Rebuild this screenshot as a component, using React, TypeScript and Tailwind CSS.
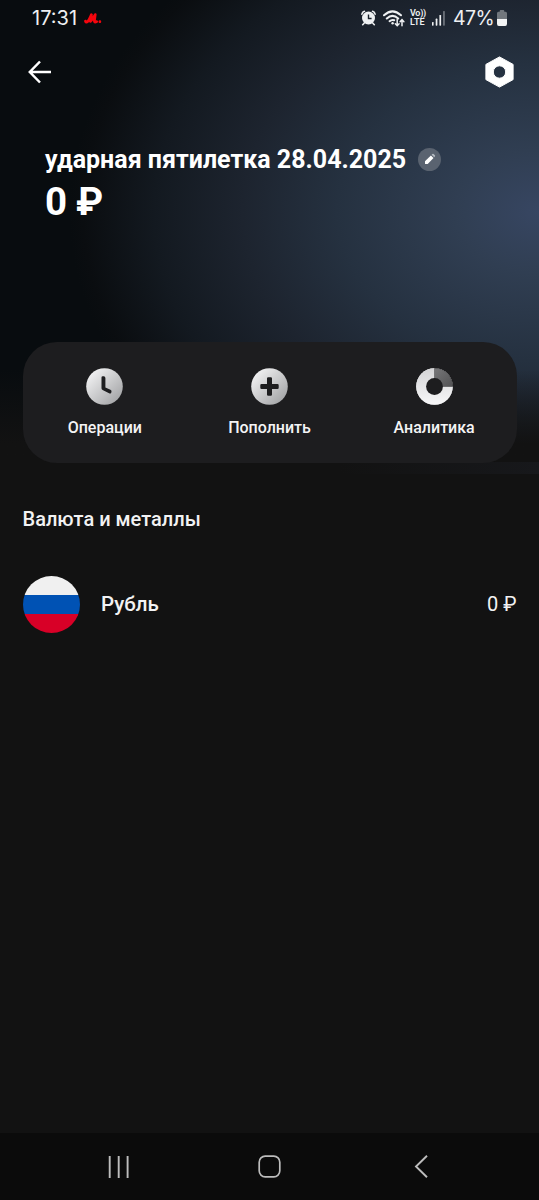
import type { ReactNode } from 'react'

interface Action {
  label: string
  icon: ReactNode
}

function StatusBar() {
  return (
    <div className="flex h-9 items-center justify-between pl-8 pr-[32px] text-[#eef0f2]">
      <div className="flex items-center gap-[6px]">
        <span className="w-[46px] whitespace-nowrap font-['Inter',sans-serif] text-[20px] leading-9 tracking-[0px]">17:31</span>
        <svg className="h-[11px] w-[18px]" viewBox="0 0 17 10" fill="none" stroke="#f5050d" strokeLinecap="round" strokeLinejoin="round">
          <path d="M1.400 7.400Q1.900 9.300 3.500 7.900C5 6.400 5.900 3.800 7 1.400L6 7.800C8 6 9.300 3.700 10.600 1.300L9.800 7.500Q10 9 12 7.900" strokeWidth="2.600" />
          <circle cx="15" cy="8" r="0.8" fill="#f5050d" strokeWidth="1" />
        </svg>
      </div>

      <div className="flex h-9 items-center">
        {/* Alarm */}
        <svg className="mr-[7px] h-4 w-[15px]" viewBox="0 0 15 16">
          <circle cx="7.500" cy="8" r="6.500" fill="#eef0f2" />
          <path d="M.9 4.100Q1.300 2.100 3.400 1.300M14.100 4.100Q13.700 2.100 11.600 1.300M3.100 13.200L1.700 14.700M11.900 13.200l1.400 1.500" fill="none" stroke="#eef0f2" strokeWidth="1.600" strokeLinecap="round" />
          <path d="M7.500 4.500V8.500H10.600" fill="none" stroke="#18202a" strokeWidth="1.400" />
        </svg>
        {/* Wifi */}
        <svg className="mr-[5px] h-[17px] w-[22px]" viewBox="0 0 22 17" fill="none" stroke="#eef0f2" strokeLinecap="round">
          <path d="M1 5.300Q9.500-2.600 18 5.300M3.800 8.500Q9.500 3.200 15.200 8.500M6.600 11.200Q8.600 9.400 11.200 10.200" strokeWidth="2" />
          <circle cx="9.600" cy="13.200" r="1.200" fill="#eef0f2" stroke="none" />
          <path d="M14.200 9.600v6M12.300 13.700l1.900 2 1.900-2M19 15.800v-6M17.100 11.700l1.900-2 1.900 2" strokeWidth="1.500" />
        </svg>
        <div className="mr-[6px] flex w-4 flex-col font-['Roboto',sans-serif] text-[9px] font-semibold leading-[9px]">
          <span className="whitespace-nowrap tracking-[-0.3px]">Vo))</span>
          <span className="tracking-[0.1px]">LTE</span>
        </div>
        {/* Signal */}
        <svg className="mr-[8px] h-[15px] w-[13px]" viewBox="0 0 13 15" fill="#eef0f2">
          <rect x="0" y="11" width="1.600" height="3.700" rx=".6" />
          <rect x="3.700" y="7.600" width="1.700" height="7.100" rx=".6" />
          <rect x="7.400" y="4" width="1.700" height="10.700" rx=".6" />
          <rect x="11.100" y="0" width="1.700" height="14.700" rx=".6" opacity=".4" />
        </svg>
        <span className="w-[44px] whitespace-nowrap font-['Inter',sans-serif] text-[19.5px] leading-9 tracking-[-0.6px]">47%</span>
        {/* Battery */}
        <svg className="h-4 w-[10px]" viewBox="0 0 11 16" preserveAspectRatio="none">
          <path d="M3 1q0-1 1-1h3q1 0 1 1v.8h1.500Q11 1.800 11 3.300V9H0V3.300Q0 1.800 1.500 1.800H3z" fill="#72777d" />
          <path d="M0 9h11v4.700Q11 16 9 16H2Q0 16 0 13.700z" fill="#f2f3f4" />
        </svg>
      </div>
    </div>
  )
}

function TopBar() {
  return (
    <div className="flex h-[72px] items-center justify-between pl-7 pr-[25px]">
      <svg className="h-6 w-6" viewBox="0 0 24 24" fill="none" stroke="white" strokeWidth="2.500">
        <path d="M12 1.500L1.800 12 12 22.500M1.800 12H23" />
      </svg>
      <svg className="h-8 w-[29px]" viewBox="0 0 29 32">
        <path fillRule="evenodd" fill="white" stroke="white" strokeWidth="1" strokeLinejoin="round" d="M14.500.9L28.100 8.400V23.600L14.500 31.100.9 23.600V8.400zM14.500 9.800a6.200 6.200 0 100 12.400 6.200 6.200 0 000-12.400z" />
      </svg>
    </div>
  )
}

function Header() {
  return (
    <div className="px-[45px] pt-[34px] font-['Roboto',sans-serif] text-white">
      <div className="flex h-[34px] items-center gap-3">
        <h1 className="w-[361px] whitespace-nowrap pt-[2px] text-[25px] font-bold leading-[34px]">ударная пятилетка 28.04.2025</h1>
        <span className="flex h-[23px] w-[23px] items-center justify-center rounded-full bg-[#5a6370]">
          <svg className="h-3 w-3" viewBox="0 0 12 12">
            <path d="M1 8.300L6.900 2.400 9.500 5 3.700 10.900H1.500Q1 10.900 1 10.400z" fill="white" />
            <path d="M7.600 1.700l.8-.7q.6-.5 1.200 0l1.300 1.300q.5.600 0 1.200l-.7.800z" fill="#b4bac1" />
          </svg>
        </span>
      </div>
      <p className="mt-[3px] text-[38.5px] font-bold leading-[46px] tracking-[-0.3px]">0 ₽</p>
    </div>
  )
}

const actions: Action[] = [
  {
    label: 'Операции',
    icon: (
      <path d="M15.500 9.500q0-1.300 1.300-1.300h.9q1.700 0 1.700 1.700v9.700l5 2.200q1.300.6 1.100 1.800l-.2 1q-.3 1.500-1.700.8l-7-3.500q-1.100-.6-1.100-1.700z" fill="#1d1d1f" />
    ),
  },
  {
    label: 'Пополнить',
    icon: (
      <path d="M16 10.500q0-1.200 1.200-1.200h2.600q1.200 0 1.200 1.200v5.500h5.500q1.200 0 1.200 1.200v2.600q0 1.200-1.200 1.200H21v5.500q0 1.200-1.200 1.200h-2.600q-1.200 0-1.200-1.200V21h-5.500q-1.200 0-1.200-1.200v-2.600q0-1.200 1.200-1.200H16z" fill="#1d1d1f" />
    ),
  },
  {
    label: 'Аналитика',
    icon: (
      <>
        <circle cx="18.500" cy="18.500" r="18.300" fill="url(#ring)" />
        <path d="M18.500 18.500V0A18.500 18.500 0 0137 18.500z" fill="#1d1d1f" />
        <path d="M18.500 18.500V.2A18.300 18.300 0 0136.800 18.500z" fill="url(#quarter)" />
        <circle cx="18.500" cy="18.500" r="8.400" fill="#1d1d1f" />
      </>
    ),
  },
]

function Actions() {
  return (
    <div className="mx-[22.5px] mt-[116.5px] grid h-[121px] grid-cols-3 rounded-[34px] bg-[#1d1d1f]">
      {actions.map(({ label, icon }) => (
        <button key={label} className="flex flex-col items-center pt-[26px]">
          <svg className="h-[37px] w-[37px]" viewBox="0 0 37 37">
            <defs>
              <linearGradient id="disc" x1="0" y1="0" x2="1" y2="1">
                <stop offset=".1" stopColor="#f3f3f4" />
                <stop offset=".9" stopColor="#a3a4a6" />
              </linearGradient>
              <linearGradient id="ring" x1="0" y1="0" x2="0" y2="1">
                <stop stopColor="#d4d4d6" />
                <stop offset="1" stopColor="#f7f7f8" />
              </linearGradient>
              <linearGradient id="quarter" x1="0" y1="0" x2="1" y2="1">
                <stop stopColor="#777779" />
                <stop offset="1" stopColor="#525254" />
              </linearGradient>
            </defs>
            <circle cx="18.500" cy="18.500" r="18.300" fill="url(#disc)" />
            {icon}
          </svg>
          <span className="mt-[13px] font-['Roboto',sans-serif] text-[16px] font-medium leading-5 text-[#f4f4f5]">{label}</span>
        </button>
      ))}
    </div>
  )
}

function Currencies() {
  return (
    <section className="px-[22.5px] pt-[43px] font-['Roboto',sans-serif] text-[#f2f2f3]">
      <h2 className="text-[20px] font-medium leading-[26px]">Валюта и металлы</h2>
      <div className="mt-[44px] flex h-[57px] items-center">
        <span className="flex h-[57px] w-[57px] flex-col overflow-hidden rounded-full">
          <span className="h-[19px] bg-[#f0f0f0]" />
          <span className="h-[19px] bg-[#0052b4]" />
          <span className="h-[19px] bg-[#d80027]" />
        </span>
        <span className="ml-[21.5px] text-[20.5px] font-medium">Рубль</span>
        <span className="ml-auto text-[20px]">0 ₽</span>
      </div>
    </section>
  )
}

function NavBar() {
  return (
    <nav className="mt-auto grid h-[67px] grid-cols-[238px_63px_238px] items-center justify-items-center bg-[#0b0b0b]">
      <svg className="h-[22px] w-[22px]" viewBox="0 0 22 22" fill="none" stroke="#bdbdbd" strokeWidth="1.900">
        <path d="M1.700 0v22M10.700 0v22M19.600 0v22" />
      </svg>
      <svg className="h-[23px] w-[23px]" viewBox="0 0 23 23" fill="none" stroke="#bdbdbd" strokeWidth="1.700">
        <rect x="1.200" y="1.200" width="20.600" height="20.600" rx="6" />
      </svg>
      <svg className="ml-[2px] h-[23px] w-[14px]" viewBox="0 0 14 23" fill="none" stroke="#bdbdbd" strokeWidth="1.900">
        <path d="M13 .7L2 11.500 13 22.300" />
      </svg>
    </nav>
  )
}

export default function App() {
  return (
    <div className="relative isolate flex h-[1200px] w-[539px] flex-col overflow-hidden bg-[#121212]">
      {/* Glow behind the header */}
      <div className="absolute inset-x-0 top-0 -z-10 h-[462px] bg-[radial-gradient(ellipse_470px_345px_at_539px_212px,#374662_0%,#303e52_18%,#253140_43%,#1d242f_63%,#131920_82%,#0a0d10_97%,#080c0f_100%)]" />
      <div className="absolute inset-x-0 top-[370px] -z-10 h-[92px] bg-linear-to-b from-transparent to-[#121212] to-80%" />
      <div className="absolute right-0 top-[462px] -z-10 h-3 w-[200px] bg-linear-to-r from-[#121212] to-[#17181b]" />
      <StatusBar />
      <TopBar />
      <Header />
      <Actions />
      <Currencies />
      <NavBar />
    </div>
  )
}
